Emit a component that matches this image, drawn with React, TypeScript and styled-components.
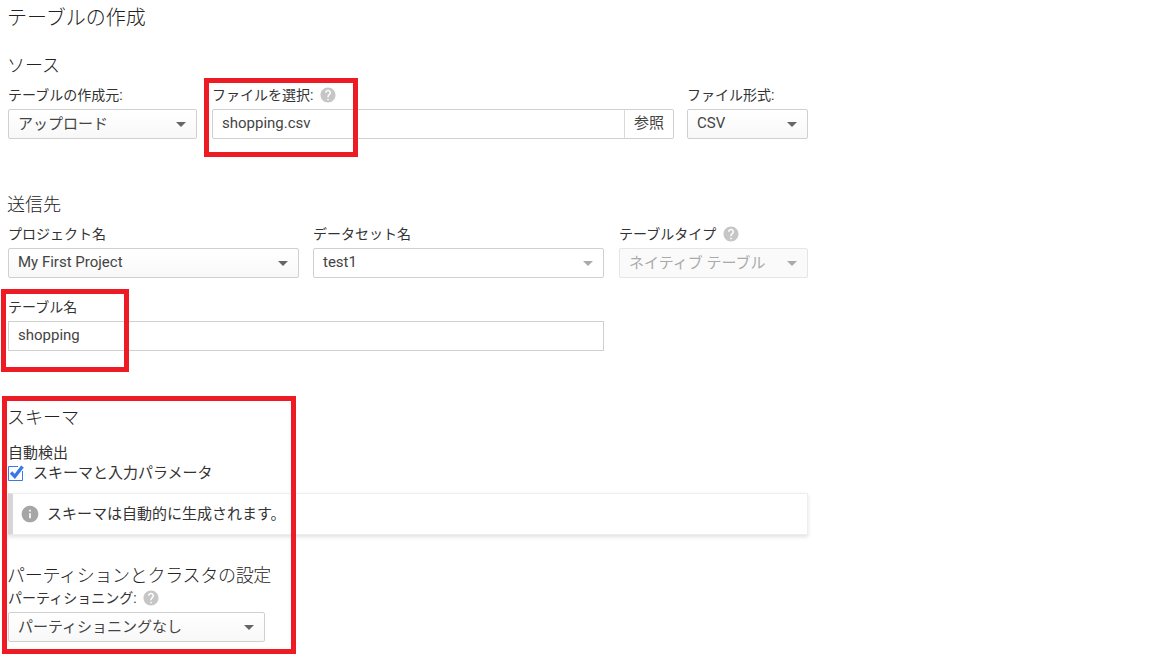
import React from 'react';
import styled, { createGlobalStyle } from 'styled-components';

const GlobalStyle = createGlobalStyle`
  html, body {
    margin: 0;
    padding: 0;
    background: #fff;
  }
  body {
    font-family: Roboto, "Noto Sans CJK JP", sans-serif;
    color: #333;
    overflow: hidden;
  }
  * {
    box-sizing: border-box;
  }
`;

const HelpIcon = () => (
  <HelpSvg width="18" height="18" viewBox="0 0 24 24">
    <path
      fill="#c6c6c6"
      d="M12 2C6.48 2 2 6.48 2 12s4.48 10 10 10 10-4.48 10-10S17.52 2 12 2zm1 17h-2v-2h2v2zm2.07-7.75l-.9.92C13.45 12.9 13 13.5 13 15h-2v-.5c0-1.1.45-2.1 1.17-2.83l1.24-1.26c.37-.36.59-.86.59-1.41 0-1.1-.9-2-2-2s-2 .9-2 2H8c0-2.21 1.79-4 4-4s4 1.79 4 4c0 .88-.36 1.68-.93 2.25z"
    />
  </HelpSvg>
);

const InfoIcon = () => (
  <svg width="20" height="20" viewBox="0 0 24 24">
    <path
      fill="#a6a6a6"
      d="M12 2C6.48 2 2 6.48 2 12s4.48 10 10 10 10-4.48 10-10S17.52 2 12 2zm1 15h-2v-6h2v6zm0-8h-2V7h2v2z"
    />
  </svg>
);

const CheckIcon = () => (
  <CheckSvg width="17" height="16" viewBox="0 0 17 16">
    <path fill="none" stroke="#3b78e7" strokeWidth="1" d="M.5 1.5h14v14H.5z" />
    <path fill="#fff" d="M10 0h7v6h-7z" />
    <path fill="none" stroke="#3b78e7" strokeWidth="3.4" d="M3 7.5l3.8 4L14.5 1.5" />
  </CheckSvg>
);

const Select = ({
  value,
  width,
  disabled,
  plain,
}: {
  value: string;
  width?: string;
  disabled?: boolean;
  plain?: boolean;
}) => (
  <SelectBox $width={width} $disabled={disabled} $plain={plain}>
    <RaisedText>{value}</RaisedText>
    <Caret $muted={disabled || plain} />
  </SelectBox>
);

export default function App() {
  return (
    <Page>
      <GlobalStyle />
      <Form>
        <PageTitle>テーブルの作成</PageTitle>

        <SourceSection>
          <SectionTitle>ソース</SectionTitle>
          <FieldRow>
            <Field $width="189px">
              <Label>テーブルの作成元:</Label>
              <Select value="アップロード" />
            </Field>
            <Field $width="462px" $margin="0 13px 0 15px">
              <Label>
                ファイルを選択: <HelpIcon />
              </Label>
              <FileInput>
                <FileName>shopping.csv</FileName>
                <BrowseButton>参照</BrowseButton>
              </FileInput>
            </Field>
            <Field $width="121px">
              <Label>ファイル形式:</Label>
              <Select value="CSV" />
            </Field>
          </FieldRow>
        </SourceSection>

        <DestSection>
          <SectionTitle>送信先</SectionTitle>
          <FieldRow>
            <Field $width="291px">
              <Label>プロジェクト名</Label>
              <Select value="My First Project" />
            </Field>
            <Field $width="291px" $margin="0 15px 0 14px">
              <Label>データセット名</Label>
              <Select value="test1" plain />
            </Field>
            <Field $width="189px">
              <Label>
                テーブルタイプ <HelpIcon />
              </Label>
              <Select value="ネイティブ テーブル" disabled />
            </Field>
          </FieldRow>
          <TableNameField $width="596px">
            <Label>テーブル名</Label>
            <TextInput>shopping</TextInput>
          </TableNameField>
        </DestSection>

        <SchemaSection>
          <SectionTitle>スキーマ</SectionTitle>
          <AutoLabel>自動検出</AutoLabel>
          <CheckRow>
            <CheckIcon />
            <RaisedText>スキーマと入力パラメータ</RaisedText>
          </CheckRow>
          <InfoBox>
            <InfoIcon />
            <RaisedText>スキーマは自動的に生成されます。</RaisedText>
          </InfoBox>
        </SchemaSection>

        <PartitionSection>
          <PartitionTitle>パーティションとクラスタの設定</PartitionTitle>
          <Label>
            パーティショニング: <HelpIcon />
          </Label>
          <Select value="パーティショニングなし" width="257px" />
        </PartitionSection>
      </Form>

      <Marker $left={204} $top={78} $width={154} $height={79} />
      <Marker $left={1} $top={289} $width={128} $height={83} />
      <Marker $left={2} $top={396} $width={294} $height={258} />
    </Page>
  );
}

const Page = styled.div`
  position: relative;
  width: 1152px;
  height: 659px;
  overflow: hidden;
`;

const Form = styled.div`
  width: 808px;
  padding-left: 8px;
  display: flex;
  flex-direction: column;
`;

const PageTitle = styled.h1`
  margin: 0 0 0 -1px;
  height: 36px;
  font-size: 20px;
  font-weight: 300;
  line-height: 36px;
  color: #222;
`;

const SectionTitle = styled.h2`
  margin: 0 0 0 -1px;
  font-size: 18px;
  font-weight: 300;
  line-height: 26px;
  color: #222;
`;

const PartitionTitle = styled(SectionTitle)`
  letter-spacing: -0.3px;
  padding-top: 1px;
  margin-bottom: -1px;
`;

const SourceSection = styled.section`
  margin-top: 17px;
`;

const DestSection = styled.section`
  margin-top: 53px;
`;

const SchemaSection = styled.section`
  margin-top: 54px;
`;

const PartitionSection = styled.section`
  margin-top: 27px;
`;

const FieldRow = styled.div`
  display: flex;
  margin-top: 6px;
`;

const Field = styled.div<{ $width: string; $margin?: string }>`
  display: flex;
  flex-direction: column;
  flex: none;
  width: ${(p) => p.$width};
  margin: ${(p) => p.$margin || '0'};
`;

const TableNameField = styled(Field)`
  margin-top: 19px;
`;

const Label = styled.label`
  display: flex;
  align-items: center;
  gap: 2px;
  height: 24px;
  padding-bottom: 4px;
  font-size: 14px;
  line-height: 20px;
  color: #333;
  white-space: pre;
`;

const HelpSvg = styled.svg`
  flex: none;
`;

const RaisedText = styled.span`
  padding-bottom: 3px;
`;

const SelectBox = styled.div<{ $width?: string; $disabled?: boolean; $plain?: boolean }>`
  display: flex;
  align-items: center;
  justify-content: space-between;
  width: ${(p) => p.$width || '100%'};
  height: 30px;
  padding: 0 10px 0 9px;
  border: 1px solid ${(p) => (p.$disabled ? '#e5e5e5' : '#d0d0d0')};
  border-radius: 2px;
  background: ${(p) => (p.$plain ? '#fff' : p.$disabled ? '#fafafa' : 'linear-gradient(#fff, #f8f8f8)')};
  font-size: 15px;
  color: ${(p) => (p.$disabled ? '#aaa' : '#444')};
  white-space: nowrap;
`;

const Caret = styled.i<{ $muted?: boolean }>`
  width: 0;
  height: 0;
  border-left: 5px solid transparent;
  border-right: 5px solid transparent;
  border-top: 5px solid ${(p) => (p.$muted ? '#aaa' : '#666')};
`;

const FileInput = styled.div`
  display: flex;
  height: 30px;
  border: 1px solid #d0d0d0;
  border-radius: 2px;
  font-size: 15px;
  color: #444;
`;

const FileName = styled.div`
  flex: 1;
  padding: 0 9px;
  line-height: 26px;
`;

const BrowseButton = styled.div`
  width: 49px;
  border-left: 1px solid #d9d9d9;
  text-align: center;
  line-height: 26px;
`;

const TextInput = styled.div`
  height: 30px;
  padding: 0 9px;
  border: 1px solid #d0d0d0;
  font-size: 15px;
  line-height: 26px;
  color: #444;
`;

const AutoLabel = styled.div`
  margin-top: 12px;
  font-size: 15px;
  line-height: 20px;
  color: #333;
`;

const CheckRow = styled.div`
  display: flex;
  align-items: center;
  gap: 8px;
  height: 20px;
  font-size: 15px;
  color: #333;
`;

const CheckSvg = styled.svg`
  flex: none;
`;

const InfoBox = styled.div`
  display: flex;
  align-items: center;
  gap: 7px;
  height: 42px;
  margin-top: 10px;
  padding-left: 7px;
  border: 1px solid #eee;
  border-left: 5px solid #d6d6d6;
  box-shadow: 0 2px 4px rgba(0, 0, 0, 0.12);
  font-size: 15px;
  color: #333;
`;

const Marker = styled.div<{ $left: number; $top: number; $width: number; $height: number }>`
  position: absolute;
  left: ${(p) => p.$left}px;
  top: ${(p) => p.$top}px;
  width: ${(p) => p.$width}px;
  height: ${(p) => p.$height}px;
  border: 5px solid #ed1c24;
`;
